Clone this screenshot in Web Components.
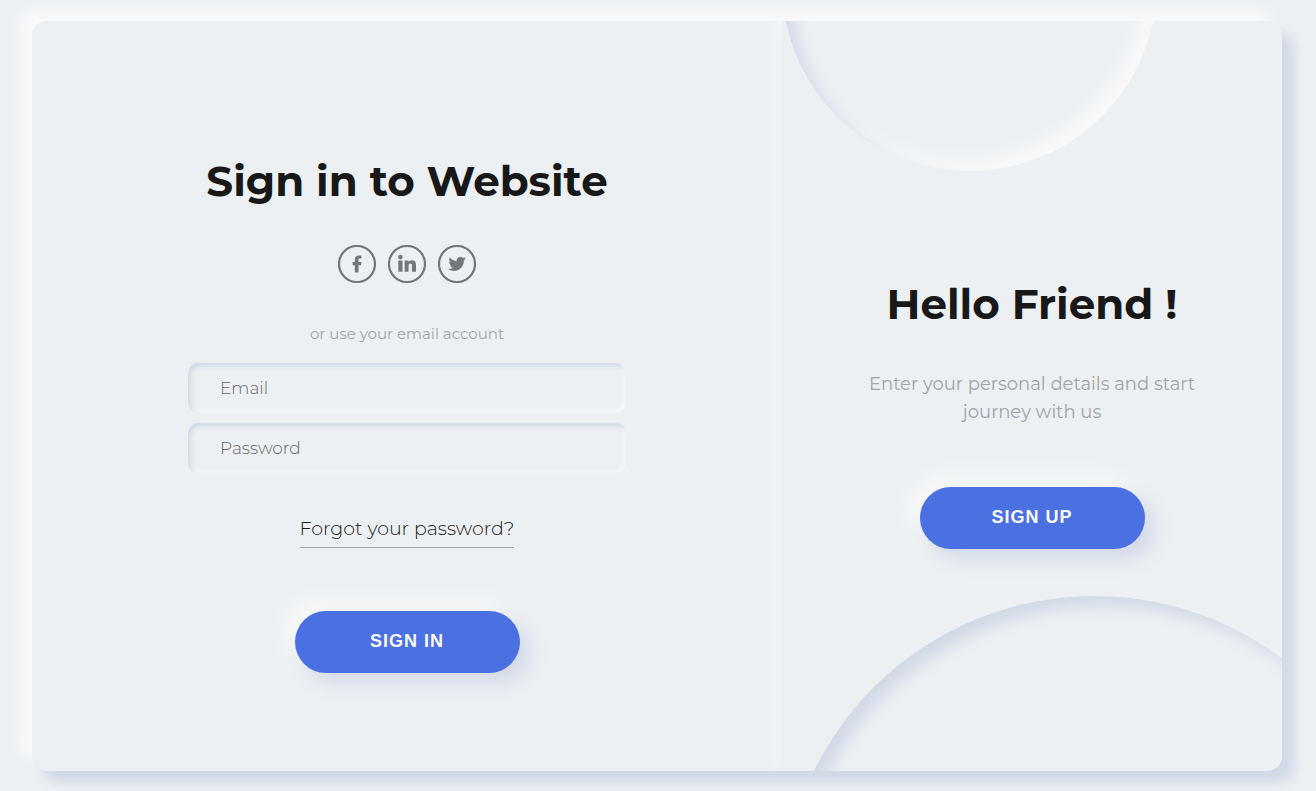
<!DOCTYPE html>
<html lang="en">
<head>
<meta charset="utf-8">
<meta name="viewport" content="width=device-width, initial-scale=1">
<title>Sign in</title>
<style>
  :root {
    --surface: #ecf0f3;
    --shade: #d1d9e6;
    --light: #f9f9f9;
    --gray: #a0a5a8;
    --ink: #181818;
    --accent: #4b70e2;
  }
  * { box-sizing: border-box; }
  body {
    margin: 0;
    min-height: 100vh;
    padding: 20px 34px 20px 32px;
    display: flex;
    align-items: center;
    justify-content: center;
    background: var(--surface);
    color: var(--ink);
    font-family: Montserrat, Inter, sans-serif;
    overflow: hidden;
  }
</style>
</head>
<body>
<auth-card>
  <sign-in-panel slot="form"></sign-in-panel>
  <welcome-panel slot="aside">
    <span slot="title">Hello Friend !</span>
    <span slot="text">Enter your personal details and start journey with us</span>
    <pill-button slot="action">SIGN UP</pill-button>
  </welcome-panel>
</auth-card>

<script>
  const define = (name, html, setup) => {
    const template = document.createElement('template');
    template.innerHTML = `<style>*, *::before, *::after { box-sizing: border-box; }</style>${html}`;
    customElements.define(name, class extends HTMLElement {
      constructor() {
        super();
        this.attachShadow({ mode: 'open' }).append(template.content.cloneNode(true));
      }
      connectedCallback() {
        if (setup) setup(this, this.shadowRoot);
      }
    });
  };

  define('pill-button', `
    <style>
      :host { display: block; }
      button {
        display: block;
        width: 225px;
        height: 62px;
        padding: 0 0 2px;
        border: 0;
        border-radius: 31px;
        background: var(--accent);
        color: var(--light);
        font: 700 18px/24px "Liberation Sans", Arial, sans-serif;
        letter-spacing: 1px;
        box-shadow: 10px 10px 20px var(--shade), -10px -10px 20px var(--light);
        cursor: pointer;
      }
    </style>
    <button type="button"><slot></slot></button>`);

  define('text-field', `
    <style>
      :host { display: block; }
      input {
        display: block;
        width: 100%;
        height: 50px;
        padding: 0 32px;
        border: 0;
        border-radius: 10px;
        outline: 0;
        background: var(--surface);
        color: var(--ink);
        font: 300 17px/24px Montserrat, Inter, sans-serif;
        box-shadow: inset 3px 3px 5px var(--shade), inset -2px -2px 5px var(--light);
      }
      input::placeholder { color: #686868; opacity: 1; }
    </style>
    <input>`, (host, root) => {
      const input = root.querySelector('input');
      input.type = host.getAttribute('type') || 'text';
      input.placeholder = host.getAttribute('label');
      input.setAttribute('aria-label', host.getAttribute('label'));
    });

  const glyphs = {
    Facebook: '<path d="M16.800 27.600V20.300h-2.200v-3.400h2.200v-2.200c0-2.900 1.700-4.300 4.400-4.300 1.100 0 1.900.1 2.200.1v3.100h-1.400c-1.200 0-1.500.5-1.500 1.300v2h3l-.5 3.400h-2.500v7.300z"/>',
    LinkedIn: '<circle cx="12.400" cy="12.100" r="2.300"/><path d="M10.300 15.500h4.200v11.300h-4.200zM16.600 15.500h3.900v1.500c.7-1.100 1.900-1.800 3.500-1.800 3 0 4 1.900 4 4.900v6.700h-4.100v-6.100c0-1.500-.3-2.300-1.500-2.300-1.300 0-1.800 1-1.800 2.400v6h-4z"/>',
    Twitter: '<path d="M27.300 13.700c-.6.300-1.200.4-1.900.5.700-.4 1.200-1 1.500-1.800-.7.400-1.400.6-2.100.8a3.450 3.450 0 0 0-5.900 3.100c-2.800-.1-5.300-1.500-7-3.500-.9 1.500-.4 3.500 1 4.500-.5 0-1.100-.2-1.500-.4 0 1.600 1.100 3.100 2.700 3.400-.5.100-1 .1-1.500.1.400 1.300 1.600 2.300 3.100 2.300a6.900 6.900 0 0 1-5 1.400c6.500 4.200 14.900-.2 14.900-8.300v-.4c.7-.5 1.300-1 1.700-1.700z" stroke="currentColor" stroke-width=".5"/>'
  };

  define('social-link', `
    <style>
      :host { display: block; }
      a { display: block; color: #747678; }
      svg { display: block; width: 38px; height: 38px; }
    </style>
    <a href="#"><svg viewBox="0 0 38 38" fill="currentColor" aria-hidden="true">
      <circle cx="19" cy="19" r="18" fill="none" stroke="currentColor" stroke-width="2.200"/>
      <g></g>
    </svg></a>`, (host, root) => {
      const name = host.getAttribute('name');
      root.querySelector('a').setAttribute('aria-label', name);
      root.querySelector('g').innerHTML = glyphs[name];
    });

  define('sign-in-panel', `
    <style>
      :host { display: block; }
      form {
        display: flex;
        flex-direction: column;
        align-items: center;
        padding: 130px 32px 98px;
      }
      h1 { margin: 0; font-size: 42px; line-height: 60px; font-weight: 700; text-align: center; }
      .social { display: flex; gap: 12px; margin-top: 34px; }
      p { margin: 41px 0 19px; font-size: 15px; line-height: 20px; color: var(--gray); }
      .fields { display: grid; gap: 10px; width: 100%; max-width: 438px; }
      a {
        margin: 44px 0 63px;
        padding-bottom: 6px;
        border-bottom: 1px solid var(--gray);
        color: var(--ink);
        font-size: 19px;
        line-height: 24px;
        font-weight: 300;
        text-decoration: none;
      }
    </style>
    <form>
      <h1>Sign in to Website</h1>
      <div class="social">
        <social-link name="Facebook"></social-link>
        <social-link name="LinkedIn"></social-link>
        <social-link name="Twitter"></social-link>
      </div>
      <p>or use your email account</p>
      <div class="fields">
        <text-field type="email" label="Email"></text-field>
        <text-field type="password" label="Password"></text-field>
      </div>
      <a href="#">Forgot your password?</a>
      <pill-button>SIGN IN</pill-button>
    </form>`);

  define('welcome-panel', `
    <style>
      :host {
        display: block;
        position: relative;
        height: 100%;
        overflow: hidden;
      }
      .circle {
        position: absolute;
        left: 0;
        border-radius: 50%;
        background: var(--surface);
        box-shadow: inset 10px 10px 15px var(--shade), inset -10px -10px 15px var(--light);
      }
      .top { top: -225px; width: 375px; height: 375px; }
      .bottom { bottom: -450px; width: 625px; height: 625px; }
      .content {
        position: relative;
        height: 100%;
        display: flex;
        flex-direction: column;
        align-items: center;
        justify-content: center;
        padding: 32px 64px 0;
        text-align: center;
      }
      h2 { margin: 0; font-size: 42px; line-height: 60px; font-weight: 700; }
      p { margin: 36px 0 61px; max-width: 350px; font-size: 18px; line-height: 28px; color: var(--gray); }
    </style>
    <div class="circle bottom"></div>
    <div class="circle top"></div>
    <div class="content">
      <h2><slot name="title"></slot></h2>
      <p><slot name="text"></slot></p>
      <slot name="action"></slot>
    </div>`);

  define('auth-card', `
    <style>
      :host {
        display: block;
        width: 100%;
        max-width: 1250px;
        border-radius: 15px;
        background: var(--surface);
        box-shadow: 12px 12px 12px var(--shade), -12px -12px 12px var(--light);
      }
      main {
        display: grid;
        grid-template-columns: 3fr 2fr;
        border-radius: 15px;
        overflow: hidden;
      }
      aside {
        background: var(--surface);
        box-shadow: 5px 5px 12px var(--shade), -5px -5px 12px var(--light);
      }
    </style>
    <main>
      <section><slot name="form"></slot></section>
      <aside><slot name="aside"></slot></aside>
    </main>`);
</script>
</body>
</html>
